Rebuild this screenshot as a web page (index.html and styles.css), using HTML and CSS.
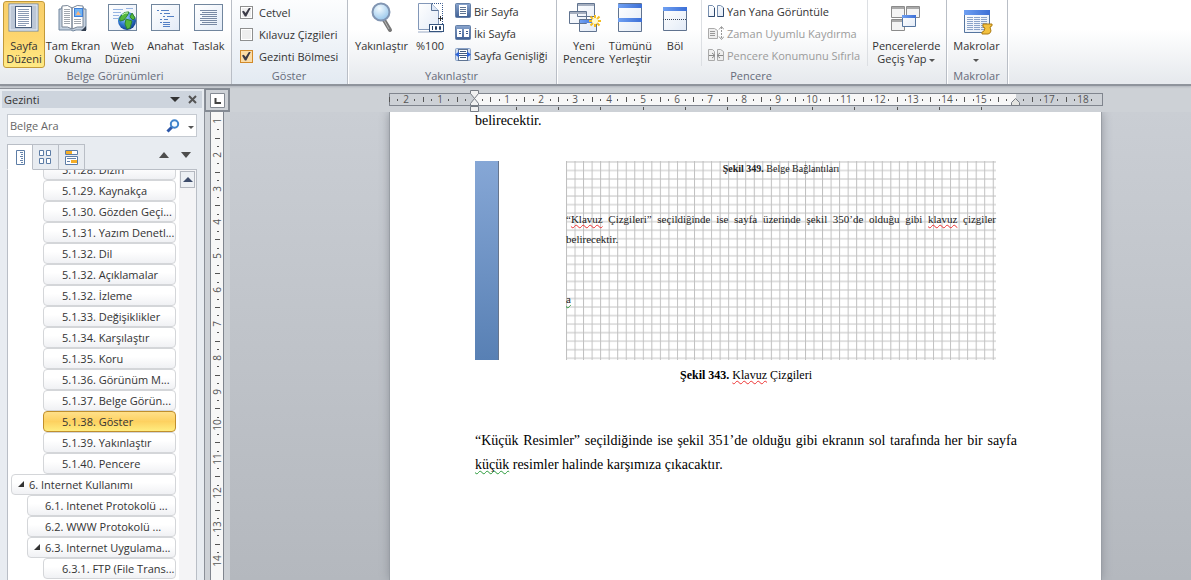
FILE: index.html
```html
<!DOCTYPE html>
<html lang="tr">
<head>
<meta charset="utf-8">
<title>Görünüm</title>
<link rel="stylesheet" href="styles.css">
</head>
<body>
<svg class="defs" aria-hidden="true">
  <defs>
    <linearGradient id="paper" x1="0" y1="0" x2="1" y2="1"><stop offset="0" stop-color="#fff"/><stop offset="1" stop-color="#e3ebf7"/></linearGradient>
    <linearGradient id="bar" x1="0" y1="0" x2="1" y2="0"><stop offset="0" stop-color="#6fa0f2"/><stop offset="1" stop-color="#3c6fd6"/></linearGradient>
    <radialGradient id="globe" cx=".4" cy=".3" r=".7"><stop offset="0" stop-color="#a8d8ff"/><stop offset=".6" stop-color="#2f78d0"/><stop offset="1" stop-color="#123f8c"/></radialGradient>
    <radialGradient id="lens" cx=".4" cy=".3" r=".8"><stop offset="0" stop-color="#f2fafe"/><stop offset="1" stop-color="#8cc0ea"/></radialGradient>
    <linearGradient id="tile" x1="0" y1="0" x2="0" y2="1"><stop offset="0" stop-color="#8ba6cf"/><stop offset="1" stop-color="#3f5f93"/></linearGradient>
  </defs>
</svg>

<header class="ribbon">
  <section class="group views">
    <div class="tools">
      <button class="big selected">
        <svg width="32" height="32"><rect x="1" y="2" width="29" height="27" fill="#bcc7d6" stroke="#7089a8"/><rect x="2" y="3" width="27" height="25" fill="none" stroke="#e9eff7"/><rect x="7.500" y="4.500" width="16" height="21" fill="#fff" stroke="#4a5f7c"/><path d="M10 7.500h11M10 9.500h11M10 11.500h11M10 13.500h11M10 15.500h11M10 17.500h11M10 19.500h11M10 21.500h11M10 23.500h8" stroke="#8b9bb4"/></svg>
        <span>Sayfa<br>Düzeni</span>
      </button>
      <button class="big">
        <svg width="32" height="32"><path d="M2 7h2l1-2q6-2 10 1q5-3 11-1l1 2h2v21H19l-3 1-2-1H2z" fill="#c5d1df" stroke="#71869e"/><path d="M5 4q6-2 10 2v21q-4-3-10-2zM15 6q5-4 11-2v21q-6-1-11 2z" fill="#fff" stroke="#7a8797"/><path d="M7 7.500h6M7 9.500h6M7 11.500h6M7 13.500h6M7 15.500h6M7 17.500h6M7 19.500h6M7 21.500h6M17 17.500h7M17 19.500h7M17 21.500h7" stroke="#a1a7ae"/><rect x="17.500" y="6.500" width="8" height="8" fill="#70b4f4" stroke="#407ed6"/><path d="M19 13l2-4 3 4z" fill="#ffb37a"/><path d="M24 29l5-5v5z" fill="#333f50"/></svg>
        <span>Tam Ekran<br>Okuma</span>
      </button>
      <button class="big">
        <svg width="32" height="32"><rect x="1.500" y="2.500" width="28" height="26" fill="url(#paper)" stroke="#71869e"/><path d="M6 7.500h10M6 10.500h8M6 13.500h6M6 16.500h5M19 6.500h7" stroke="#96b4e2"/><circle cx="20" cy="19" r="9" fill="url(#globe)"/><path d="M14 14q3-5 8-4l-2 4-3 4-4 1q-1-3 1-5M19 17l6 2-2 7-3 1-2-5zM25 11l3 5-2 2-3-3z" fill="#55b83c" stroke="#2d8432"/><path d="M15 13q3-3 6-2" stroke="#d7ffc6" fill="none"/></svg>
        <span>Web<br>Düzeni</span>
      </button>
      <button class="big">
        <svg width="32" height="32"><rect x="1.500" y="2.500" width="28" height="26" fill="url(#paper)" stroke="#71869e"/><path d="M7 8.500h2M11 8.500h8M10 11.500h2M14 11.500h6M13 14.500h2M17 14.500h7M10 17.500h2M14 17.500h4M10 20.500h2M13 20.500h7M13 22.500h7M13 24.500h7" stroke="#527fc5"/></svg>
        <span>Anahat</span>
      </button>
      <button class="big">
        <svg width="32" height="32"><rect x="1.500" y="2.500" width="28" height="26" fill="url(#paper)" stroke="#71869e"/><path d="M7 8.500h17M9 10.500h15M7 12.500h17M9 14.500h15M7 16.500h17M7 18.500h17M9 20.500h15M7 22.500h17" stroke="#7889a4"/></svg>
        <span>Taslak</span>
      </button>
    </div>
    <h2>Belge Görünümleri</h2>
  </section>

  <section class="group show">
    <div class="tools rows">
      <label><input type="checkbox" checked>Cetvel</label>
      <label><input type="checkbox">Kılavuz Çizgileri</label>
      <label><input type="checkbox" class="hot" checked>Gezinti Bölmesi</label>
    </div>
    <h2>Göster</h2>
  </section>

  <section class="group zoom">
    <div class="tools">
      <button class="big">
        <svg width="32" height="32"><path d="M18 19l6 10" stroke="#777" stroke-width="4" stroke-linecap="round"/><path d="M18 19l5 9" stroke="#b8b8b8" stroke-width="1"/><circle cx="15" cy="11" r="8.500" fill="url(#lens)" stroke="#8195b2" stroke-width="2"/></svg>
        <span>Yakınlaştır</span>
      </button>
      <button class="big">
        <svg width="32" height="32"><path d="M14 2.500h14.500V31H4" fill="none" stroke="#38598c" stroke-dasharray="1 1"/><path d="M4.500 2.500h13l7 7v19h-20z" fill="url(#paper)" stroke="#8297b8"/><path d="M17.500 2.500v7h7" fill="#dce7f6" stroke="#5b7396"/><path d="M24 17.500h5M26.500 15v5" stroke="#333" fill="none"/><rect x="15.500" y="23.500" width="14" height="7" fill="#fff" stroke="#35547d"/><path d="M18.500 25v4M21.500 25.500h1v3h-1zM25.500 25.500h1v3h-1z" stroke="#223c60" fill="none"/></svg>
        <span>%100</span>
      </button>
      <div class="rows">
        <button class="small"><svg width="16" height="16"><rect x=".5" y=".5" width="15" height="14" rx="1" fill="url(#tile)" stroke="#6580a8"/><rect x="4" y="2" width="8" height="11" fill="#fff"/><path d="M5 4.500h6M5 6.500h6M5 8.500h6M5 10.500h6" stroke="#5f7493"/></svg>Bir Sayfa</button>
        <button class="small"><svg width="16" height="16"><rect x=".5" y=".5" width="15" height="14" rx="1" fill="url(#tile)" stroke="#6580a8"/><path d="M2 4h5v8H2zM9 4h5v8H9z" fill="#fff"/><path d="M4 6.500h2M4 8.500h2M11 6.500h2M11 8.500h2" stroke="#405d8b"/></svg>İki Sayfa</button>
        <button class="small"><svg width="16" height="16"><rect x=".5" y="1.500" width="15" height="12" rx="1" fill="#cfdcf0" stroke="#8aa2c8"/><rect x="3.500" y="2.500" width="9" height="11" fill="#fff" stroke="#5f7493"/><path d="M5 4.500h6M4 6.500h8M4 8.500h8M5 10.500h6" stroke="#445c80"/><path d="M0 7.500l4-3v6zM16 7.500l-4-3v6z" fill="#2f65d8"/></svg>Sayfa Genişliği</button>
      </div>
    </div>
    <h2>Yakınlaştır</h2>
  </section>

  <section class="group window">
    <div class="tools">
      <button class="big">
        <svg width="32" height="32"><g fill="url(#paper)" stroke="#60738f"><path d="M9.500 2.500h17v13h-17zM1.500 10.500h17v12h-17zM11.500 18.500h17v12h-17z"/></g><path d="M10 3h16v2H10zM2 11h16v2H2z" fill="#a5afc0"/><path d="M12 19h16v3H12z" fill="url(#bar)"/><path d="M27 14v12M21 20h12M22.500 15.500l9 9M31.500 15.500l-9 9" stroke="#f3bd24" stroke-width="2"/><circle cx="27" cy="20" r="3" fill="#fffbd0"/></svg>
        <span>Yeni<br>Pencere</span>
      </button>
      <button class="big">
        <svg width="32" height="32"><path d="M4.500 2.500h23v28h-23z" fill="url(#paper)" stroke="#60738f"/><path d="M4 3h24v4H4zM4 17h24v4H4z" fill="url(#bar)"/></svg>
        <span>Tümünü<br>Yerleştir</span>
      </button>
      <button class="big">
        <svg width="32" height="32"><path d="M4.500 6.500h23v23h-23z" fill="url(#paper)" stroke="#60738f"/><path d="M4 6h24v4H4z" fill="url(#bar)"/><path d="M4 18.500h24" stroke="#38465e" stroke-dasharray="1 1"/></svg>
        <span>Böl</span>
      </button>
      <div class="rows ruled">
        <button class="small"><svg width="16" height="16"><path d="M.5 2.500h4l2 2v9h-6zM9.500 2.500h3l3 2v9h-6z" fill="url(#paper)" stroke="#7890b0"/><path d="M6.500 5v8.500h-6M15.500 5v8.500h-6" stroke="#2e496f" fill="none"/></svg>Yan Yana Görüntüle</button>
        <button class="small" disabled><svg width="16" height="16"><path d="M.5 3.500h6l3 2v8h-9z" fill="#eee" stroke="#aaa"/><path d="M2 6.500h5M2 8.500h5M2 10.500h5" stroke="#999"/><path d="M13.500 2v12" stroke="#999" stroke-dasharray="2 1"/><path d="M11 4.500l2.500-3 2.500 3M11 11.500l2.500 3 2.500-3" stroke="#999" fill="none"/></svg>Zaman Uyumlu Kaydırma</button>
        <button class="small" disabled><svg width="16" height="16"><path d="M.5 2.500h4l2 2v9h-6zM9.500 2.500h3l3 2v9h-6z" fill="#eee" stroke="#aaa"/><path d="M1 8.500h5M4 6l3 2.500L4 11M15 8.500h-5M12 6L9 8.500l3 2.500" stroke="#888" fill="none"/></svg>Pencere Konumunu Sıfırla</button>
      </div>
      <button class="big switch">
        <svg width="32" height="32"><g fill="#f4f4f4" stroke="#8b8b8b"><path d="M1.500 5.500h13v11h-13zM16.500 5.500h13v11h-13zM1.500 18.500h13v11h-13z"/></g><path d="M2 6h12v2H2zM17 6h12v2H17zM2 19h12v2H2z" fill="#aaa"/><path d="M12.500 14.500h13v11h-13z" fill="url(#paper)" stroke="#55759f"/><path d="M12 14h14v3H12z" fill="url(#bar)"/></svg>
        <span>Pencerelerde<br>Geçiş Yap <i class="caret"></i></span>
      </button>
    </div>
    <h2>Pencere</h2>
  </section>

  <section class="group macros">
    <div class="tools">
      <button class="big">
        <svg width="32" height="32"><path d="M3.500 9.500h25v22h-25z" fill="url(#paper)" stroke="#55759f"/><path d="M3 9h26v5H3z" fill="url(#bar)"/><path d="M6 16.500h20M6 18.500h20M6 20.500h20M6 22.500h20M6 24.500h20M6 26.500h20M6 28.500h20" stroke="#8ba3c9" stroke-dasharray="6 1"/><path d="M22 23h9q1 2-2 3l1 4q-1 3-3 3h-6q-1-2 2-3l1-3-2-1z" fill="#f3c13f" stroke="#ad7b12"/></svg>
        <span>Makrolar<br><i class="caret"></i></span>
      </button>
    </div>
    <h2>Makrolar</h2>
  </section>
</header>

<main class="workspace">
  <aside class="nav">
    <div class="nav-title"><h1>Gezinti</h1>
      <button aria-label="Seçenekler"><svg width="10" height="5"><path d="M0 0h10L5 5z" fill="#333"/></svg></button>
      <button aria-label="Kapat"><svg width="10" height="9"><path d="M1 1l7 7M8 1L1 8" stroke="#555" stroke-width="2"/></svg></button>
    </div>
    <div class="search">
      <input type="text" placeholder="Belge Ara" aria-label="Belge Ara">
      <button aria-label="Ara"><svg width="14" height="14"><path d="M1.500 12.500l5-5" stroke="#2c56a8" stroke-width="3"/><circle cx="8.500" cy="5" r="3.700" fill="#f5fbff" stroke="#3f83cc" stroke-width="2"/></svg></button>
      <button aria-label="Arama seçenekleri"><i class="caret"></i></button>
    </div>
    <div class="tabs">
      <button class="on" aria-label="Başlıklar"><svg width="16" height="16"><path d="M4.500 1.500h8v14h-8z" fill="#fff" stroke="#5d7da6"/><path d="M8 3.500h3M9 5.500h2M8 7.500h3M9 9.500h2M8 11.500h3M9 13.500h2" stroke="#6683aa"/></svg></button>
      <button aria-label="Sayfalar"><svg width="16" height="16"><path d="M2.500 1.500h4v5h-4zM9.500 1.500h4v5h-4zM2.500 9.500h4v5h-4zM9.500 9.500h4v5h-4z" fill="#fff" stroke="#5d7da6"/></svg></button>
      <button aria-label="Sonuçlar"><svg width="16" height="16"><path d="M2.500 1.500h12v4h-12zM2.500 7.500h12v8h-12z" fill="#fff" stroke="#5d7da6"/><path d="M3 2h6v3H3zM8 11h6v3H8z" fill="#f4ad27"/><path d="M4 9.500h9M4 12.500h3" stroke="#6683aa"/></svg></button>
      <span class="steps">
        <button aria-label="Önceki"><svg width="10" height="6"><path d="M0 6h10L5 0z" fill="#4d4d4d"/></svg></button>
        <button aria-label="Sonraki"><svg width="10" height="6"><path d="M0 0h10L5 6z" fill="#4d4d4d"/></svg></button>
      </span>
    </div>
    <div class="outline">
      <ul>
        <li><a href="#">5.1.28. Dizin</a></li>
        <li><a href="#">5.1.29. Kaynakça</a></li>
        <li><a href="#">5.1.30. Gözden Geçi...</a></li>
        <li><a href="#">5.1.31. Yazım Denetl...</a></li>
        <li><a href="#">5.1.32. Dil</a></li>
        <li><a href="#">5.1.32. Açıklamalar</a></li>
        <li><a href="#">5.1.32. İzleme</a></li>
        <li><a href="#">5.1.33. Değişiklikler</a></li>
        <li><a href="#">5.1.34. Karşılaştır</a></li>
        <li><a href="#">5.1.35. Koru</a></li>
        <li><a href="#">5.1.36. Görünüm M...</a></li>
        <li><a href="#">5.1.37. Belge Görün...</a></li>
        <li><a href="#" class="current">5.1.38. Göster</a></li>
        <li><a href="#">5.1.39. Yakınlaştır</a></li>
        <li><a href="#">5.1.40. Pencere</a></li>
        <li class="l1"><a href="#"><i class="open"></i>6. Internet Kullanımı</a></li>
        <li class="l2"><a href="#">6.1. Intenet Protokolü ...</a></li>
        <li class="l2"><a href="#">6.2. WWW Protokolü ...</a></li>
        <li class="l2"><a href="#"><i class="open"></i>6.3. Internet Uygulama...</a></li>
        <li><a href="#">6.3.1. FTP (File Trans...</a></li>
      </ul>
      <div class="scroll"><button aria-label="Yukarı kaydır"><svg width="10" height="5"><path d="M0 5h10L5 0z" fill="#3e4c6b"/></svg></button></div>
    </div>
  </aside>

  <div class="vside">
    <button class="tabstop" aria-label="Sekme türü"><svg width="15" height="15"><path d="M.5.500h14v14H.5z" fill="#fff" stroke="#848a93"/><path d="M5.500 5v5H11" fill="none" stroke="#444" stroke-width="2"/></svg></button>
    <svg class="vruler" id="vruler" width="14" height="600"></svg>
  </div>

  <div class="canvas">
    <div class="hruler-row"><svg id="hruler" width="715" height="24"></svg></div>
    <div class="desk">
      <article class="page">
        <p>belirecektir.</p>
        <figure>
          <div class="picture">
            <div class="strip"></div>
            <div class="shot">
              <svg class="grid" width="430" height="199" aria-hidden="true">
                <defs><pattern id="cells" width="17.070" height="17.070" patternUnits="userSpaceOnUse"><path d="M.5 0v17.070M0 1h17.070" stroke="#bebebe"/><path d="M9.030 0v17.070M0 9.530h17.070" stroke="#c2c2c2"/></pattern></defs>
                <rect width="430" height="199" fill="url(#cells)"/>
              </svg>
              <div class="shot-text">
                <p class="center"><b>Şekil 349.</b> Belge Bağlantıları</p>
                <p class="para">“<u>Klavuz</u> Çizgileri” seçildiğinde ise sayfa üzerinde şekil 350’de olduğu gibi <u>klavuz</u> çizgiler belirecektir.</p>
                <p><u class="green">a</u></p>
              </div>
            </div>
          </div>
          <figcaption><b>Şekil 343.</b> <u>Klavuz</u> Çizgileri</figcaption>
        </figure>
        <p class="body">“Küçük Resimler” seçildiğinde ise şekil 351’de olduğu gibi ekranın sol tarafında her bir sayfa <u class="green">küçük</u> resimler halinde karşımıza çıkacaktır.</p>
      </article>
    </div>
  </div>
</main>
<script src="rulers.js"></script>
</body>
</html>
```
FILE: styles.css
```css
* { box-sizing: border-box; }
body, h1, h2, p, ul, figure { margin: 0; padding: 0; }
body { height: 100vh; display: flex; flex-direction: column; overflow: hidden; font: 11px/13px "Open Sans", "Noto Sans", sans-serif; color: #333; background: #cdd1d6; }
button { border: 0; padding: 0; margin: 0; background: none; font: inherit; color: inherit; }
h1, h2 { font: inherit; }
svg { display: block; flex: none; }
.defs { position: absolute; width: 0; height: 0; }
.caret { display: inline-block; border: 3px solid transparent; border-top-color: #555; border-bottom: 0; vertical-align: middle; }

.ribbon { display: flex; flex: none; height: 86px; background: linear-gradient(#fff 0, #fff 35%, #e7eaee 96%); border-bottom: 2px solid #8f949c; box-shadow: 0 1px 2px #b0b5bc; position: relative; }
.group { display: flex; flex-direction: column; flex: none; border-right: 1px solid #b9bec6; padding-right: 1px; box-shadow: 1px 0 #fff; }
.group h2 { height: 15px; text-align: center; color: #666b7a; }
.tools { height: 69px; display: flex; align-items: flex-start; }
.big { display: flex; flex-direction: column; align-items: center; height: 67px; line-height: 13px; border: 1px solid transparent; white-space: nowrap; }
.big svg { margin-bottom: 6px; overflow: visible; }
.big.selected { background: linear-gradient(#f8cf6b, #fdd66f 55%, #ffea85); border: 1px solid #c29a3a; border-radius: 3px; }
.small { display: flex; align-items: center; gap: 3px; height: 22px; white-space: nowrap; }
.small:disabled { color: #9b9b9b; }
.rows { display: flex; flex-direction: column; align-items: flex-start; }

.views { width: 232px; }
.views .tools { padding: 1px 0 0 3px; }
.views .big { width: 43px; }
.views .big svg { margin-bottom: 5px; }
.views .big:nth-child(1) { width: 42px; }
.views .big:nth-child(2) { width: 56px; }
.show { width: 116px; background: linear-gradient(#fcfdfe, #e3eaf2); }
.show .rows { padding-left: 8px; padding-top: 1px; }
.show label { display: flex; align-items: center; gap: 6px; height: 22px; }
.show input { appearance: none; width: 13px; height: 13px; margin: 0; border: 1px solid #8e8f8f; background: #eee; box-shadow: inset 0 0 0 1px #fff; }
.show input.hot { border-color: #d18a2a; background: #fbdca6; box-shadow: none; }
.show input:checked::after { content: ""; display: block; width: 9px; height: 9px; margin: 1px; background: #3c3c48; clip-path: polygon(0 45%, 20% 35%, 40% 62%, 80% 0, 100% 0, 48% 100%, 32% 100%); }
.zoom { width: 209px; }
.zoom .tools { padding-left: 3px; }
.zoom .big { width: 61px; }
.zoom .big:nth-child(2) { width: 36px; }
.zoom .rows { padding-left: 7px; }
.window { width: 390px; }
.window .tools { padding-left: 3px; }
.window .big { width: 48px; }
.window .big:nth-child(2) { width: 46px; }
.window .big:nth-child(3) { width: 44px; }
.window .rows { width: 168px; padding-left: 6px; margin-left: 4px; border: solid #dcdfe3; border-width: 0 1px; }
.window .switch { width: 78px; }
.macros { width: 61px; }
.macros .big { width: 59px; }

.workspace { flex: 1; min-height: 0; display: grid; grid-template-columns: 205px 25px 1fr; padding-top: 2px; }
.nav { display: flex; flex-direction: column; min-height: 0; background: #e8ecf1; border: solid #8b9098; border-width: 1px 1px 0 0; padding: 2px 2px 0; }
.nav-title { display: flex; align-items: center; gap: 8px; height: 17px; padding: 0 4px 0 2px; background: #cdd4dd; }
.nav-title h1 { flex: 1; }
.search { display: flex; align-items: center; gap: 8px; height: 23px; margin: 6px 5px 7px; padding-right: 2px; background: #fff; border: 1px solid #c5cad1; }
.search input { flex: 1; min-width: 0; border: 0; outline: 0; padding: 0 2px; font: inherit; background: none; }
.search input::placeholder { color: #666; }
.tabs { display: flex; height: 26px; margin: 0 5px; border-bottom: 1px solid #b9bec6; }
.tabs > button { width: 26px; height: 26px; padding: 4px; border: 1px solid #b9bec6; border-left-width: 0; }
.tabs > .on { background: #fff; border-left-width: 1px; border-bottom-color: #fff; }
.steps { display: flex; flex: 1; justify-content: flex-end; align-items: center; gap: 12px; padding: 0 6px 4px 0; }
.outline { flex: 1; min-height: 0; display: flex; margin: 0 5px; background: #fff; border: solid #b9bec6; border-width: 0 1px; overflow: hidden; }
.outline ul { flex: 1; min-width: 0; list-style: none; margin-top: -11px; padding: 0 3px; }
.outline li { padding-left: 32px; }
.outline .l1 { padding-left: 0; }
.outline .l2 { padding-left: 16px; }
.outline a { display: flex; align-items: center; position: relative; height: 21px; padding-left: 18px; border: 1px solid #d4d6d9; border-radius: 4px; background: linear-gradient(#fff 40%, #f0f1f4); color: #333; text-decoration: none; white-space: nowrap; overflow: hidden; }
.outline a.current { background: linear-gradient(#ffe08a, #fdd160 50%, #ffed80); border-color: #c08f2c; }
.outline .l1 a, .outline .l2 a { padding-left: 17px; }
.outline .open { position: absolute; left: 6px; top: 6px; width: 6px; height: 6px; background: #333; clip-path: polygon(100% 0, 100% 100%, 0 100%); }
.scroll { width: 17px; background: #f4f4f6; padding: 1px; }
.scroll button { display: grid; place-items: center; width: 15px; height: 17px; border: 1px solid #b4b8c0; background: #edf0f4; }

.vside { display: flex; flex-direction: column; align-items: center; min-height: 0; overflow: hidden; background: #cdd1d6; }
.tabstop { display: grid; place-items: center; flex: none; width: 25px; height: 24px; border: 2px solid #848a93; border-left-width: 1px; background: #cdd1d6; }
.vruler { margin-right: 2px; }
.canvas { display: flex; flex-direction: column; min-width: 0; min-height: 0; }
.hruler-row { flex: none; padding-left: 159px; height: 24px; overflow: hidden; }
.hruler-row svg { overflow: visible; }
.desk { flex: 1; min-height: 0; padding-left: 160px; background: linear-gradient(#caced4, #b4b8be); }
.page { width: 711px; height: 100%; padding: 0 84px 0 85px; background: #fff; box-shadow: -1px 0 #999ea5, 1px 0 #999ea5, 0 0 10px #888d95; clip-path: inset(0 -12px); font: 14px/24px "Liberation Serif", serif; color: #000; }
.page > p:first-child { height: 49px; line-height: 17px; }
.picture { display: flex; justify-content: space-between; width: 521px; height: 199px; }
.strip { width: 24px; background: linear-gradient(#86a7d6, #5880b4); border-right: 1px solid #66758d; }
.shot { position: relative; width: 430px; }
.grid { position: absolute; inset: 0; }
.shot-text { position: relative; font-size: 11px; line-height: 20px; color: #222; }
.shot-text p { line-height: 20px; }
.shot-text .center { text-align: center; height: 48px; line-height: 15px; font-size: 10px; }
.shot-text .para { text-align: justify; height: 80px; }
figcaption { text-align: center; font-size: 12px; line-height: 24px; padding: 3px 0 42px; }
u { text-decoration: underline wavy #e33 1px; text-decoration-skip-ink: none; text-underline-offset: 1px; }
u.green { text-decoration-color: #2a9a3a; }
.body { text-align: justify; }
```
FILE: rulers.js
```js
const NS = "http://www.w3.org/2000/svg";
const CM = 33.84;

function add(parent, name, attrs, text) {
  const el = document.createElementNS(NS, name);
  for (const key in attrs) el.setAttribute(key, attrs[key]);
  if (text !== undefined) el.textContent = text;
  parent.appendChild(el);
}

function rect(svg, x, y, width, height, fill) {
  add(svg, "rect", { x, y, width, height, fill });
}

const label = { "text-anchor": "middle", "font-size": 10, "font-family": "Open Sans", fill: "#555" };

const h = document.getElementById("hruler");
const zero = 85.5;
rect(h, 0, 5, 714, 13, "#80858e");
rect(h, 1, 6, 712, 11, "#cdd1d6");
rect(h, 86, 6, 541, 11, "#f7f7f7");
for (let q = -10; q <= 73; q++) {
  const x = Math.round(zero + q * CM / 4) - 1;
  if (q === 0 || q === 64) continue;
  if (q % 4 === 0) {
    add(h, "text", { ...label, x, y: 15 }, Math.abs(q / 4));
  } else if (q % 2 === 0) {
    rect(h, x, 9, 1, 5, "#555");
  } else {
    rect(h, x, 11, 1, 2, "#555");
  }
}
for (let i = 1; i <= 12; i++) rect(h, Math.round(zero + i * 42.3) - 1, 19, 1, 3, "#555");
add(h, "path", { d: "M81.500 2.500h8v3l-4 5 4 5v2h-8v-2l4-5-4-5zM81.500 18.500h8v5h-8z", fill: "#f1f1f1", stroke: "#777c84" });
add(h, "path", { d: "M622.500 17.500v-3l4-4 4 4v3z", fill: "#e4e4e0", stroke: "#777c84" });

const v = document.getElementById("vruler");
rect(v, 0, 0, 14, 600, "#80858e");
rect(v, 1, 0, 12, 600, "#f7f7f7");
for (let q = 4; q <= 55; q++) {
  const y = Math.round(q * CM / 4 - 25);
  if (q % 4 === 0) {
    if (q < 56) add(v, "text", { ...label, transform: `translate(11 ${y}) rotate(-90)` }, q / 4);
  } else if (q % 2 === 0) {
    rect(v, 5, y, 5, 1, "#555");
  } else {
    rect(v, 7, y, 2, 1, "#555");
  }
}
add(v, "text", { ...label, transform: "translate(11 449) rotate(-90)" }, 14);
```
